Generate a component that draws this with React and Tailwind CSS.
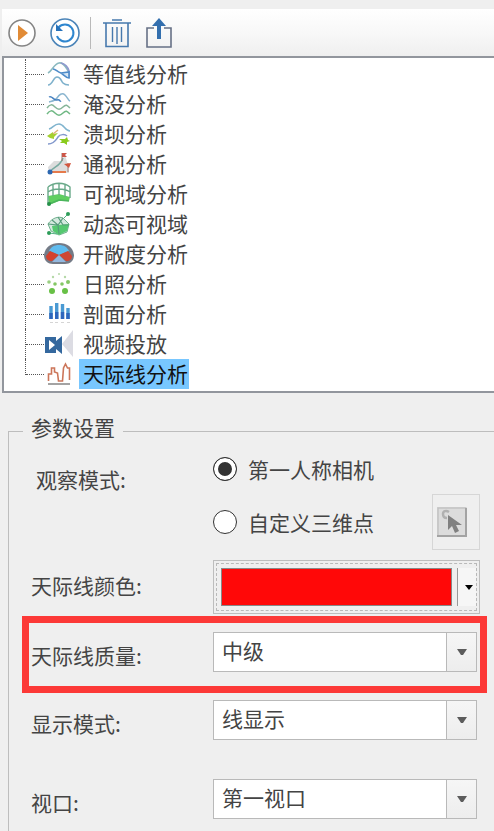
import React, { useState } from 'react';

const ContourIcon = () => (
  <svg viewBox="0 0 30 30" className="w-[30px] h-[30px]" fill="none" strokeWidth="1.6">
    <path d="M4 14C8 12 10 5 15 4s7 5 10 9" stroke="#8ab9bf" />
    <path d="M17 4c4 1 7 4 8 8v7" stroke="#8f98cf" />
    <path d="M9 10c3 0 4 3 8 4l8-1v6c-3 0-5-3-8-5" fill="#d5e6f6" stroke="#4e8cc9" />
    <path d="M4 26c5 0 5-8 9-8s4 4 6 6 3 2 6 2" stroke="#7eb1cc" />
  </svg>
);

const FloodIcon = () => (
  <svg viewBox="0 0 30 30" className="w-[30px] h-[30px]" fill="none" strokeWidth="1.5">
    <path d="M5 13c4-1 6-1 8-4s5-6 8-3 3 5 5 6" stroke="#8ab5cf" />
    <path d="M5 8c3-2 5 4 8 3s3 2 4 1" stroke="#4580c0" />
    <path d="M3 19c3-4 5-4 8-1s5 3 8 0 4-2 7 1" stroke="#85b598" />
    <path d="M3 25c3-4 5-4 8-1s5 3 8 0 4-2 7 1" stroke="#70b884" />
  </svg>
);

const DamIcon = () => (
  <svg viewBox="0 0 30 30" className="w-[30px] h-[30px]" fill="none" strokeWidth="1.5">
    <path d="M5 10c4-1 5-5 10-5s6 7 11 7" stroke="#80b4ce" />
    <path d="M4 25c6 0 8-4 10-7s7-3 9-1" stroke="#8298cc" />
    <path d="M3 17l6-4 0 2 5-1-4 4 0 2-4-1z" fill="#a4d030" />
    <path d="M9 15l5-4" stroke="#dfae78" />
    <path d="M15 20l6 0 2-2 1 3 2 1-3 1 0 3-3-2-4 0 2-2z" fill="#8acb1c" />
  </svg>
);

const SightIcon = () => (
  <svg viewBox="0 0 30 30" className="w-[30px] h-[30px]" fill="none">
    <path d="M4 18l6-6 7 0 4-6 3 10 1 8H5z" fill="#dddddd" />
    <path d="M6 23C10 17 16 18 19 9" stroke="#77aaa0" strokeWidth="1.5" />
    <path d="M18 12V4M24 23v-9" stroke="#9a7770" />
    <path d="M18 4h5l-2 2 2 2h-5z" fill="#cc5648" />
    <path d="M6 23h16" stroke="#e57a4b" strokeWidth="2" />
    <path d="M20 15l7-1-2 5z" fill="#d3563f" />
    <circle cx="6" cy="23" r="2.5" fill="#2c67b0" />
  </svg>
);

const ViewshedIcon = () => (
  <svg viewBox="0 0 30 30" className="w-[30px] h-[30px]" fill="none">
    <path d="M4 17l11-2 11 3-1 4-10 0-10 4z" fill="#5fcf60" />
    <path d="M4 8c6-5 16-5 22 0v11M4 8v16M9 6v11M15 4v12M21 6v12M4 13c6-4 16-4 22 0" stroke="#69a989" strokeWidth="1.4" />
    <path d="M5 25l10-4 10 1" stroke="#4bb55c" strokeWidth="1.5" />
    <circle cx="5" cy="25" r="2" fill="#258f4a" />
  </svg>
);

const DynamicViewIcon = () => (
  <svg viewBox="0 0 30 30" className="w-[30px] h-[30px]" fill="none">
    <path d="M4 15c4-6 10-8 15-6l6 6-2 8-8 3-8-4z" fill="#d4e9df" stroke="#70b08d" />
    <path d="M8 17l6-1 11-1-2 7-8 4-6-4z" fill="#55c870" />
    <path d="M4 15l10 1 5-7M8 11l6 5 1 9M14 8l5 8 6 0" stroke="#579b7b" strokeWidth="1.2" />
    <path d="M5 24l8 1M20 9l4-4" stroke="#52b382" />
    <circle cx="24" cy="5" r="2" fill="#2d9d59" />
    <circle cx="5" cy="24" r="2" fill="#2d9d59" />
  </svg>
);

const OpennessIcon = () => (
  <svg viewBox="0 0 30 30" className="w-[30px] h-[30px]" fill="none">
    <path d="M0 16C1 8 7 4 15 4s14 4 15 12c0 6-4 9-9 9H9c-5 0-9-3-9-9z" fill="#747b87" />
    <path d="M5 12C7 8 10 6 15 6s8 2 10 6l-10 4z" fill="#5fbbee" />
    <path d="M2 17l4-5 9 4-7 6c-4 0-6-2-6-5z" fill="#d3422f" />
    <path d="M28 17l-4-5-9 4 7 6c4 0 6-2 6-5z" fill="#cf4634" />
    <path d="M15 16l7 7H8z" fill="#93b8df" />
  </svg>
);

const SunIcon = () => (
  <svg viewBox="0 0 30 30" className="w-[30px] h-[30px]" fill="#85c765">
    <circle cx="15" cy="5" r="1" fill="#b5d9a7" />
    <circle cx="9" cy="8" r="1.2" fill="#b5d9a7" />
    <circle cx="21" cy="8" r="1.2" fill="#b5d9a7" />
    <circle cx="5" cy="13" r="1.8" fill="#9bd083" />
    <circle cx="24" cy="13" r="2" />
    <circle cx="11" cy="15" r="1.8" />
    <circle cx="18" cy="15" r="1.8" />
    <circle cx="8" cy="22" r="3" fill="#68c046" />
    <circle cx="21" cy="22" r="3" fill="#68c046" />
  </svg>
);

const ProfileIcon = () => (
  <svg viewBox="0 0 30 30" className="w-[30px] h-[30px]" fill="none" strokeWidth="3.4">
    <path d="M7 7v13M12.7 4v16M18.5 5v15M24 9v11" stroke="#4a9ad3" />
    <path d="M7 14v6M12.7 13v7M18.5 13v7M24 14v6" stroke="#2d66bd" />
    <path d="M6 23.500h3M11 23.500h3M17 23.500h3M23 23.500h3" stroke="#d5d5d5" strokeWidth="1" />
  </svg>
);

const VideoIcon = () => (
  <svg viewBox="0 0 30 30" className="w-[30px] h-[30px]">
    <path d="M18 15L29 1v27z" fill="#dcdce3" />
    <path d="M1 8h11v4l6-5v18l-6-5v4H1z" fill="#34689e" />
    <path d="M5 11l6 5-6 5z" fill="#fff" />
  </svg>
);

const SkylineIcon = () => (
  <svg viewBox="0 0 30 30" className="w-[30px] h-[30px]" fill="none">
    <path d="M4.500 22v-7h3V9h3v4l3 1 1 8h4l1-13 2-4 2 4h2v12" stroke="#cc765a" strokeWidth="1.6" />
    <path d="M4 25h22" stroke="#999" strokeWidth="1.8" />
  </svg>
);

const analyses = [
  { name: '等值线分析', Icon: ContourIcon },
  { name: '淹没分析', Icon: FloodIcon },
  { name: '溃坝分析', Icon: DamIcon },
  { name: '通视分析', Icon: SightIcon },
  { name: '可视域分析', Icon: ViewshedIcon },
  { name: '动态可视域', Icon: DynamicViewIcon },
  { name: '开敞度分析', Icon: OpennessIcon },
  { name: '日照分析', Icon: SunIcon },
  { name: '剖面分析', Icon: ProfileIcon },
  { name: '视频投放', Icon: VideoIcon },
  { name: '天际线分析', Icon: SkylineIcon },
];

const Toolbar = () => (
  <div className="flex items-center h-[47px] pl-1.5 bg-linear-to-b from-white via-[#f8f8f8] to-[#efefef]">
    <button type="button" aria-label="运行">
      <svg viewBox="0 0 28 28" className="w-7 h-7">
        <circle cx="14" cy="14" r="13" fill="#fff" stroke="#858585" strokeWidth="1.6" />
        <path d="M10 6l10 8-10 8z" fill="#e18b36" />
      </svg>
    </button>
    <button type="button" className="ml-3.5" aria-label="重置">
      <svg viewBox="0 0 30 30" className="w-[30px] h-[30px]" fill="none">
        <circle cx="15" cy="15" r="14" fill="#fff" stroke="#4b84b8" strokeWidth="1.6" />
        <path d="M8.500 9.500A8.500 8.500 0 1 1 7 18" stroke="#2f86cf" strokeWidth="2" />
        <path d="M6 6v7h7z" fill="#2672bb" />
      </svg>
    </button>
    <span className="w-px h-8 ml-2.5 bg-[#b9b9b9]" />
    <button type="button" className="ml-3" aria-label="删除">
      <svg viewBox="0 0 28 30" className="w-7 h-[30px]" fill="none" stroke="#4779ad">
        <path d="M0 5h28M9 2h10" strokeWidth="1.6" />
        <path d="M3 5v23.500h22V5" strokeWidth="1.6" />
        <path d="M9.500 9v15M14 9v17M18.500 9v15" strokeWidth="1.4" />
      </svg>
    </button>
    <button type="button" className="ml-3.5" aria-label="导出">
      <svg viewBox="0 0 28 32" className="w-7 h-8" fill="none">
        <path d="M9 11H2v19h24V11h-7" stroke="#667085" strokeWidth="1.6" />
        <path d="M14 1l7 8h-5v13h-4V9H7z" fill="#336fae" />
      </svg>
    </button>
  </div>
);

const AnalysisTree = () => {
  const [selected, setSelected] = useState('天际线分析');

  return (
    <ul className="pt-px pb-0.5 pl-[21px] bg-white border-2 border-r-0 border-[#92969d]">
      {analyses.map(({ name, Icon }, index) => (
        <li key={name} className="flex items-center h-[30px]">
          <span
            className={
              index === analyses.length - 1
                ? 'flex items-end self-start w-[19px] h-4 border-l border-dotted border-[#555]'
                : 'flex items-center w-[19px] h-full border-l border-dotted border-[#555]'
            }
          >
            <span className="w-full border-t border-dotted border-[#555]" />
          </span>
          <Icon />
          <button
            type="button"
            onClick={() => setSelected(name)}
            className={
              selected === name
                ? 'h-[30px] ml-[5px] pl-1 pr-px pb-0.5 leading-[28px] text-[#111] bg-[#78c7ff]'
                : 'h-[30px] ml-[5px] pl-1 pr-px pb-0.5 leading-[28px]'
            }
          >
            {name}
          </button>
        </li>
      ))}
    </ul>
  );
};

const SelectRow = ({ id, label, options, className }) => (
  <div className={`flex items-center ${className}`}>
    <label htmlFor={id} className="w-[182px] shrink-0 pt-1.5 leading-[30px]">
      {label}
    </label>
    <div className="relative flex-1">
      <select
        id={id}
        className="block w-full h-10 pl-2 pr-9 pb-0.5 appearance-none bg-white border border-[#b9b9b9] outline-none"
      >
        {options.map((option) => (
          <option key={option}>{option}</option>
        ))}
      </select>
      <span className="absolute inset-y-px right-px flex items-center justify-center w-[30px] border-l border-[#b9b9b9] bg-linear-to-b from-[#f6f6f6] to-[#ededed] pointer-events-none">
        <svg viewBox="0 0 10 6" className="w-2.5 h-1.5" fill="#5c5c5c">
          <path d="M0 0h10L6 6H4z" />
        </svg>
      </span>
    </div>
  </div>
);

const ModeOption = ({ value, mode, onChange, children }) => (
  <label className="flex items-center">
    <input
      type="radio"
      name="mode"
      value={value}
      checked={mode === value}
      onChange={() => onChange(value)}
      className="w-6 h-6 mr-[11px] appearance-none rounded-full border border-[#333] bg-white checked:bg-[#333] checked:shadow-[inset_0_0_0_4px_#fff]"
    />
    <span className="leading-[30px]">{children}</span>
  </label>
);

const Settings = () => {
  const [mode, setMode] = useState('first');

  return (
    <fieldset className="grow ml-2 mt-[26px] border-t border-l border-[#bdbdbd]">
      <legend className="ml-3.5 pl-2 pr-2 pb-2 leading-[16px]">参数设置</legend>

      <div className="flex items-start pl-[22px] pr-3.5">
        <span className="w-[182px] shrink-0 pt-[21px] pl-[5px] leading-[30px]">观察模式:</span>
        <div className="flex-1">
          <div className="flex items-center h-[51px]">
            <ModeOption value="first" mode={mode} onChange={setMode}>第一人称相机</ModeOption>
          </div>
          <div className="flex items-center justify-between h-14">
            <ModeOption value="custom" mode={mode} onChange={setMode}>自定义三维点</ModeOption>
            <button
              type="button"
              aria-label="拾取点"
              className="flex items-center w-12 h-14 pl-1 border border-[#d6d6d6]"
            >
              <svg viewBox="0 0 30 30" className="w-[30px] h-[30px]" fill="none">
                <path d="M0 0h30v30H0z" fill="#dcdcdc" />
                <path d="M1 29V1h28" stroke="#c2c2c2" strokeWidth="1.5" />
                <path d="M0 29h29V1" stroke="#a3a3a3" strokeWidth="2" />
                <path d="M12 5C9 3 6 4 6 7s2 4 4 4" stroke="#b0b0b0" strokeWidth="2.5" />
                <path d="M11 8v15l4-4 3 7 4-2-3-6h6z" fill="#808080" />
              </svg>
            </button>
          </div>
        </div>
      </div>

      <div className="flex items-center mt-2.5 pl-[22px] pr-3.5">
        <label htmlFor="color" className="w-[182px] shrink-0 pb-1 leading-[30px]">天际线颜色:</label>
        <button id="color" type="button" className="flex-1 h-[54px] p-0.5 border border-[#bdbdbd]">
          <span className="flex h-full p-1 pr-0 border border-dashed border-[#b9b9b9]">
            <span className="flex-1 border border-[#888] bg-[#ff0808]" />
            <span className="w-px ml-[5px] bg-[#999]" />
            <span className="flex items-center justify-center w-[18px] pl-1 bg-[#f6f6f6]">
              <svg viewBox="0 0 8 5" className="w-2 h-[5px]" fill="#000">
                <path d="M0 0h8L4 5z" />
              </svg>
            </span>
          </span>
        </button>
      </div>

      <SelectRow
        id="quality"
        label="天际线质量:"
        options={['中级', '低级', '高级']}
        className="mt-0.5 ml-[13px] mr-[7px] pt-[9px] pr-[3px] pb-3.5 pl-0.5 border-7 border-[#fc3937]"
      />
      <SelectRow
        id="display"
        label="显示模式:"
        options={['线显示', '面显示']}
        className="mt-[7px] pl-[22px] pr-[17px]"
      />
      <SelectRow
        id="viewport"
        label="视口:"
        options={['第一视口', '第二视口']}
        className="mt-[39px] pl-[22px] pr-[17px]"
      />
    </fieldset>
  );
};

const App = () => {
  return (
    <div className="flex flex-col min-h-screen pt-[9px] bg-[#efefef] text-[21px] text-[#444] font-['Noto_Sans_CJK_SC',sans-serif]">
      <div className="pl-0.5">
        <Toolbar />
        <AnalysisTree />
      </div>
      <Settings />
    </div>
  );
};

export default App;
